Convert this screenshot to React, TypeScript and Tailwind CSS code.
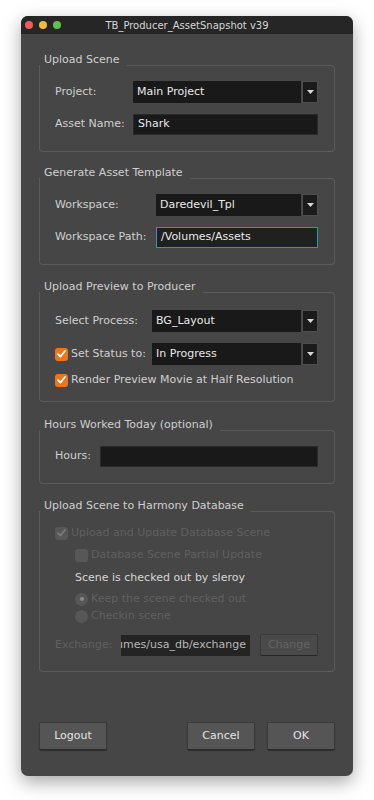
import type { ReactNode } from "react"

const font = { fontFamily: '"DejaVu Sans", "Lucida Grande", sans-serif' }

// Qt-style group box: title above the frame, top line starts after the title
const Group = ({ title, children, className = "" }: { title: string; children: ReactNode; className?: string }) => (
  <div className="flex flex-col">
    <div className="flex h-[18px]">
      <div className="flex flex-col">
        <span className="h-[14px] whitespace-nowrap pl-[5px] pr-[7px] text-[11px] leading-[18px] text-[#cfcfcf]">{title}</span>
        <div className="flex-1 border-l border-[#5b5b5b]" />
      </div>
      <div className="mt-[14px] flex-1 rounded-tr-[4px] border-t border-r border-[#5b5b5b]" />
    </div>
    <div className={`rounded-b-[4px] border-x border-b border-[#5b5b5b] ${className}`}>{children}</div>
  </div>
)

const Combo = ({ value }: { value: string }) => (
  <div className="flex h-[22px] gap-[1px]">
    <div className="flex flex-1 items-center bg-[#191919] pl-[4px] text-[11px] text-[#e8e8e8]">{value}</div>
    <div className="flex w-[16px] items-center justify-center border border-[#4e4e4e] bg-[#1b1b1b]">
      <svg width="7" height="4" viewBox="0 0 7 4"><path d="M0 0h7L3.5 4z" fill="#d8d8d8" /></svg>
    </div>
  </div>
)

const Input = ({ value = "", focus = false }: { value?: string; focus?: boolean }) => (
  <div className={`flex h-[21px] items-center pl-[4px] text-[11px] text-[#e8e8e8] ${focus ? "border border-[#2f9aa6] bg-[#202020]" : "border border-[#2a2a2a] bg-[#191919]"}`}>
    {value}
  </div>
)

const Check = ({ on = true, disabled = false }: { on?: boolean; disabled?: boolean }) => (
  <div className={`flex h-[13px] w-[13px] items-center justify-center rounded-[3px] ${disabled ? "bg-[#575757]" : "bg-[#e8781f]"}`}>
    {on && (
      <svg width="9" height="8" viewBox="0 0 9 8">
        <path d="M1 4.2L3.4 6.6L8 1" stroke={disabled ? "#7a7a7a" : "#ffffff"} strokeWidth="1.7" fill="none" strokeLinecap="round" strokeLinejoin="round" />
      </svg>
    )}
  </div>
)

const Radio = ({ on = false }: { on?: boolean }) => (
  <div className="flex h-[13px] w-[13px] items-center justify-center rounded-full bg-[#575757]">
    {on && <div className="h-[4px] w-[4px] rounded-full bg-[#8a8a8a]" />}
  </div>
)

const Button = ({ label }: { label: string }) => (
  <button className="h-[28px] w-[68px] rounded-[2px] border border-[#3a3a3a] border-b-[#2a2a2a] bg-[#555555] text-[11px] text-[#e4e4e4] shadow-[0_1px_1px_rgba(0,0,0,0.35)]">
    {label}
  </button>
)

export default function App() {
  return (
    <div className="min-h-[800px] w-[374px] bg-white pt-[16px] pl-[21px]" style={font}>
      <div className="flex h-[760px] w-[332px] flex-col overflow-hidden rounded-[7px] bg-[#464646] shadow-[0_6px_18px_rgba(0,0,0,0.35)]">
        <div className="relative flex h-[18px] shrink-0 items-center justify-center bg-[#262626]">
          <div className="absolute left-[4px] top-[5px] flex gap-[6px]">
            <span className="h-[8px] w-[8px] rounded-full bg-[#ee5c57]" />
            <span className="h-[8px] w-[8px] rounded-full bg-[#f4bb3d]" />
            <span className="h-[8px] w-[8px] rounded-full bg-[#5fc24a]" />
          </div>
          <span className="text-[10px] text-[#d6d6d6]">TB_Producer_AssetSnapshot v39</span>
        </div>

        <div className="flex flex-1 flex-col px-[18px] pt-[17px]">
          <Group title="Upload Scene" className="flex flex-col gap-[11px] pl-[15px] pr-[16px] pt-[12px] pb-[16px]">
            <div className="grid grid-cols-[78px_1fr] items-center">
              <span className="text-[11px] text-[#cfcfcf]">Project:</span>
              <Combo value="Main Project" />
            </div>
            <div className="grid grid-cols-[78px_1fr] items-center">
              <span className="text-[11px] text-[#cfcfcf]">Asset Name:</span>
              <Input value="Shark" />
            </div>
          </Group>

          <div className="mt-[12px]">
            <Group title="Generate Asset Template" className="flex flex-col gap-[11px] pl-[15px] pr-[16px] pt-[12px] pb-[16px]">
              <div className="grid grid-cols-[101px_1fr] items-center">
                <span className="text-[11px] text-[#cfcfcf]">Workspace:</span>
                <Combo value="Daredevil_Tpl" />
              </div>
              <div className="grid grid-cols-[101px_1fr] items-center">
                <span className="text-[11px] text-[#cfcfcf]">Workspace Path:</span>
                <Input value="/Volumes/Assets" focus />
              </div>
            </Group>
          </div>

          <div className="mt-[13px]">
            <Group title="Upload Preview to Producer" className="flex flex-col pl-[15px] pr-[16px] pt-[14px] pb-[14px]">
              <div className="grid grid-cols-[97px_1fr] items-center">
                <span className="text-[11px] text-[#cfcfcf]">Select Process:</span>
                <Combo value="BG_Layout" />
              </div>
              <div className="mt-[11px] grid grid-cols-[97px_1fr] items-center">
                <div className="flex items-center gap-[3px]">
                  <Check />
                  <span className="text-[11px] text-[#cfcfcf]">Set Status to:</span>
                </div>
                <Combo value="In Progress" />
              </div>
              <div className="mt-[8px] flex h-[14px] items-center gap-[3px]">
                <Check />
                <span className="text-[11px] text-[#cfcfcf]">Render Preview Movie at Half Resolution</span>
              </div>
            </Group>
          </div>

          <div className="mt-[14px]">
            <Group title="Hours Worked Today (optional)" className="pl-[15px] pr-[16px] pt-[12px] pb-[16px]">
              <div className="grid grid-cols-[45px_1fr] items-center">
                <span className="text-[11px] text-[#cfcfcf]">Hours:</span>
                <Input />
              </div>
            </Group>
          </div>

          <div className="mt-[13px]">
            <Group title="Upload Scene to Harmony Database" className="flex flex-col pl-[15px] pr-[16px] pt-[11px] pb-[15px] text-[11px]">
              <div className="flex h-[14px] items-center gap-[3px]">
                <Check disabled />
                <span className="text-[#606060]">Upload and Update Database Scene</span>
              </div>
              <div className="mt-[8px] flex h-[14px] items-center gap-[3px] pl-[20px]">
                <Check on={false} disabled />
                <span className="text-[#606060]">Database Scene Partial Update</span>
              </div>
              <div className="mt-[9px] flex h-[14px] items-center pl-[20px] text-[#d6d6d6]">Scene is checked out by sleroy</div>
              <div className="mt-[7px] flex h-[14px] items-center gap-[3px] pl-[20px]">
                <Radio on />
                <span className="text-[#606060]">Keep the scene checked out</span>
              </div>
              <div className="mt-[3px] flex h-[14px] items-center gap-[3px] pl-[20px]">
                <Radio />
                <span className="text-[#606060]">Checkin scene</span>
              </div>
              <div className="mt-[11px] flex h-[22px] items-center">
                <span className="w-[66px] shrink-0 text-[#606060]">Exchange:</span>
                <div className="flex h-[21px] w-[129px] items-center justify-end overflow-hidden whitespace-nowrap bg-[#242424] pr-[4px] text-[#b8b8b8]">
                  <span className="shrink-0">/Volumes/usa_db/exchange</span>
                </div>
                <button className="ml-[10px] h-[22px] flex-1 rounded-[2px] border border-[#383838] border-b-[#262626] bg-[#4a4a4a] text-[#636363]">Change</button>
              </div>
            </Group>
          </div>

          <div className="mt-auto mb-[26px] flex items-center">
            <Button label="Logout" />
            <div className="flex-1" />
            <Button label="Cancel" />
            <div className="ml-[12px]"><Button label="OK" /></div>
          </div>
        </div>
      </div>
    </div>
  )
}
